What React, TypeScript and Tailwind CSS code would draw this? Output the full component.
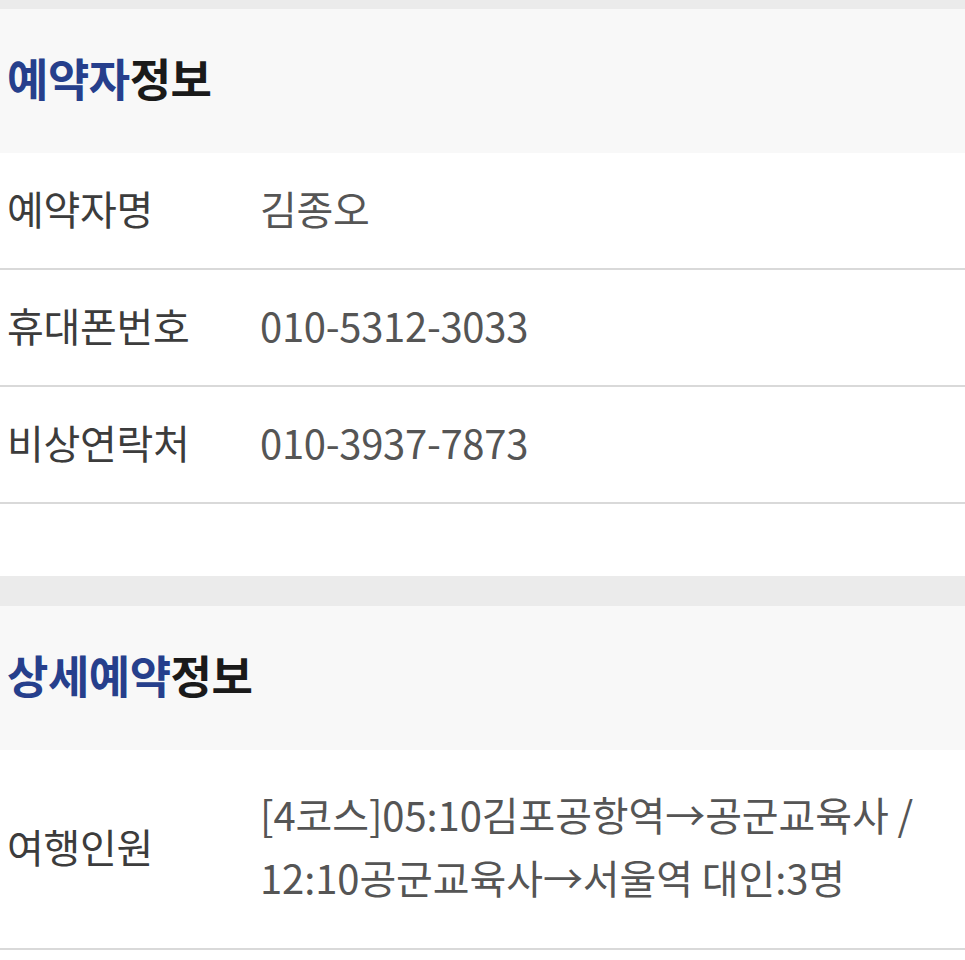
const font = { fontFamily: '"Noto Sans CJK KR", "Noto Sans", sans-serif' };

const booker = [
  { label: "예약자명", value: "김종오" },
  { label: "휴대폰번호", value: "010-5312-3033" },
  { label: "비상연락처", value: "010-3937-7873" },
];

const SectionTitle = ({ blue, black }: { blue: string; black: string }) => (
  <div className="h-[144px] bg-[#f8f8f8] flex items-center pl-[7px] pb-[8px]">
    <h2 className="text-[45px] font-bold tracking-[-0.5px] leading-none">
      <span className="text-[#263f8c]">{blue}</span>
      <span className="text-[#1a1a1a]">{black}</span>
    </h2>
  </div>
);

export default function App() {
  return (
    <div className="w-[965px] h-[960px] bg-white overflow-hidden" style={font}>
      <div className="h-[9px] bg-[#ebebeb]" />
      <SectionTitle blue="예약자" black="정보" />
      {booker.map((row) => (
        <div key={row.label} className="h-[117px] flex items-center pb-[6px] border-b-2 border-[#d9d9d9] text-[40px] leading-none tracking-[-0.3px]">
          <div className="w-[260px] pl-[7px] text-[#3c3c3c]">{row.label}</div>
          <div className="text-[#555555]">{row.value}</div>
        </div>
      ))}
      <div className="h-[72px]" />
      <div className="h-[30px] bg-[#ebebeb]" />
      <SectionTitle blue="상세예약" black="정보" />
      <div className="h-[200px] flex items-center pb-[6px] border-b-2 border-[#d9d9d9] text-[40px]">
        <div className="w-[260px] pl-[7px] text-[#3c3c3c] tracking-[-0.3px]">여행인원</div>
        <div className="flex-1 pr-[20px] text-[#555555] leading-[63px] tracking-[-0.1px]">
          [4코스]05:10김포공항역→공군교육사 /<br />
          12:10공군교육사→서울역 대인:3명
        </div>
      </div>
    </div>
  );
}
